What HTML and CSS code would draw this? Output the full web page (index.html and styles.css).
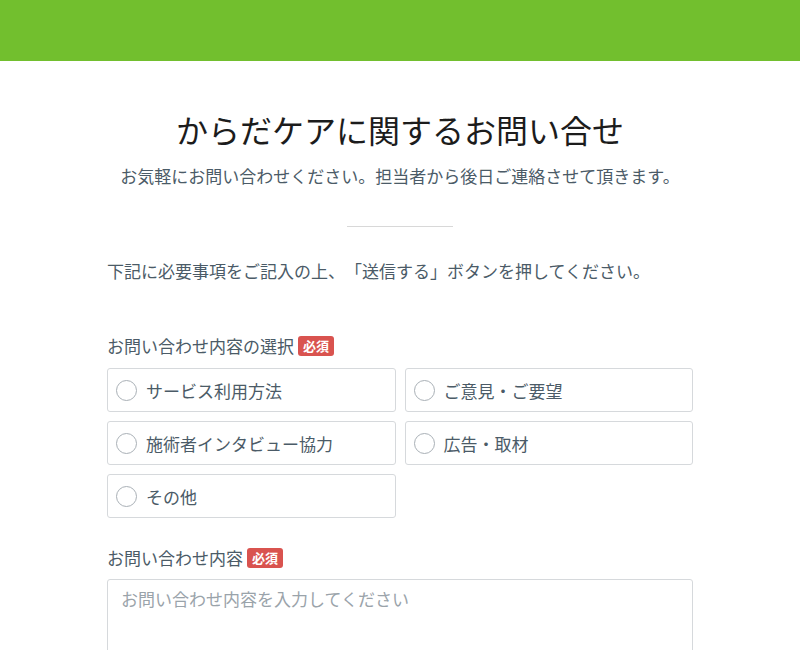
FILE: index.html
```html
<!DOCTYPE html>
<html lang="ja">
<head>
<meta charset="utf-8">
<link rel="stylesheet" href="styles.css">
</head>
<body>
<header class="topbar"></header>
<main class="content">
  <h1 class="title">からだケアに関するお問い合せ</h1>
  <p class="lead">お気軽にお問い合わせください。担当者から後日ご連絡させて頂きます。</p>
  <hr class="divider">
  <p class="note">下記に必要事項をご記入の上、「送信する」ボタンを押してください。</p>

  <div class="field">
    <div class="label">お問い合わせ内容の選択<span class="req">必須</span></div>
    <div class="options">
      <label class="option"><span class="radio"></span>サービス利用方法</label>
      <label class="option"><span class="radio"></span>ご意見・ご要望</label>
      <label class="option"><span class="radio"></span>施術者インタビュー協力</label>
      <label class="option"><span class="radio"></span>広告・取材</label>
      <label class="option"><span class="radio"></span>その他</label>
    </div>
  </div>

  <div class="field field2">
    <div class="label">お問い合わせ内容<span class="req">必須</span></div>
    <div class="textarea">お問い合わせ内容を入力してください</div>
  </div>
</main>
</body>
</html>
```
FILE: styles.css
```css
html, body {
  margin: 0;
  padding: 0;
  background: #fff;
  font-family: "Noto Sans CJK JP", "Noto Sans", sans-serif;
  color: #4b5b67;
  text-spacing-trim: space-all;
}
.topbar {
  height: 61px;
  background: #72bf2e;
}
.content {
  width: 586px;
  margin: 0 auto;
  padding-top: 44px;
}
.title {
  margin: 0;
  text-align: center;
  font-size: 32px;
  font-weight: 400;
  color: #1c1c1c;
  line-height: 48px;
}
.lead {
  margin: 11px 0 0;
  text-align: center;
  font-size: 17px;
  line-height: 24px;
}
.divider {
  width: 106px;
  margin: 38px auto 0;
  border: 0;
  border-top: 1px solid #d8d8d8;
  height: 0;
}
.note {
  margin: 32px 0 0;
  font-size: 17px;
  line-height: 24px;
}
.field {
  margin-top: 51px;
}
.label {
  font-size: 17px;
  line-height: 24px;
  display: flex;
  align-items: center;
}
.req {
  display: inline-block;
  margin-left: 4px;
  background: #d9534f;
  color: #fff;
  font-size: 13px;
  font-weight: 700;
  line-height: 20px;
  padding: 0 5px;
  border-radius: 3px;
}
.options {
  margin-top: 10px;
  display: grid;
  grid-template-columns: 1fr 1fr;
  gap: 9px;
}
.option {
  height: 44px;
  box-sizing: border-box;
  border: 1px solid #d6d9dc;
  border-radius: 3px;
  display: flex;
  align-items: center;
  padding-left: 8px;
  font-size: 17px;
  color: #4b5b67;
}
.radio {
  width: 21px;
  height: 21px;
  box-sizing: border-box;
  border: 1px solid #a9b0b6;
  border-radius: 50%;
  margin-right: 9px;
  flex: none;
}
.field2 {
  margin-top: 28px;
}
.textarea {
  margin-top: 9px;
  height: 120px;
  box-sizing: border-box;
  border: 1px solid #d6d9dc;
  border-radius: 3px;
  padding: 7px 13px;
  font-size: 17px;
  line-height: 24px;
  color: #9aa3aa;
}
```
